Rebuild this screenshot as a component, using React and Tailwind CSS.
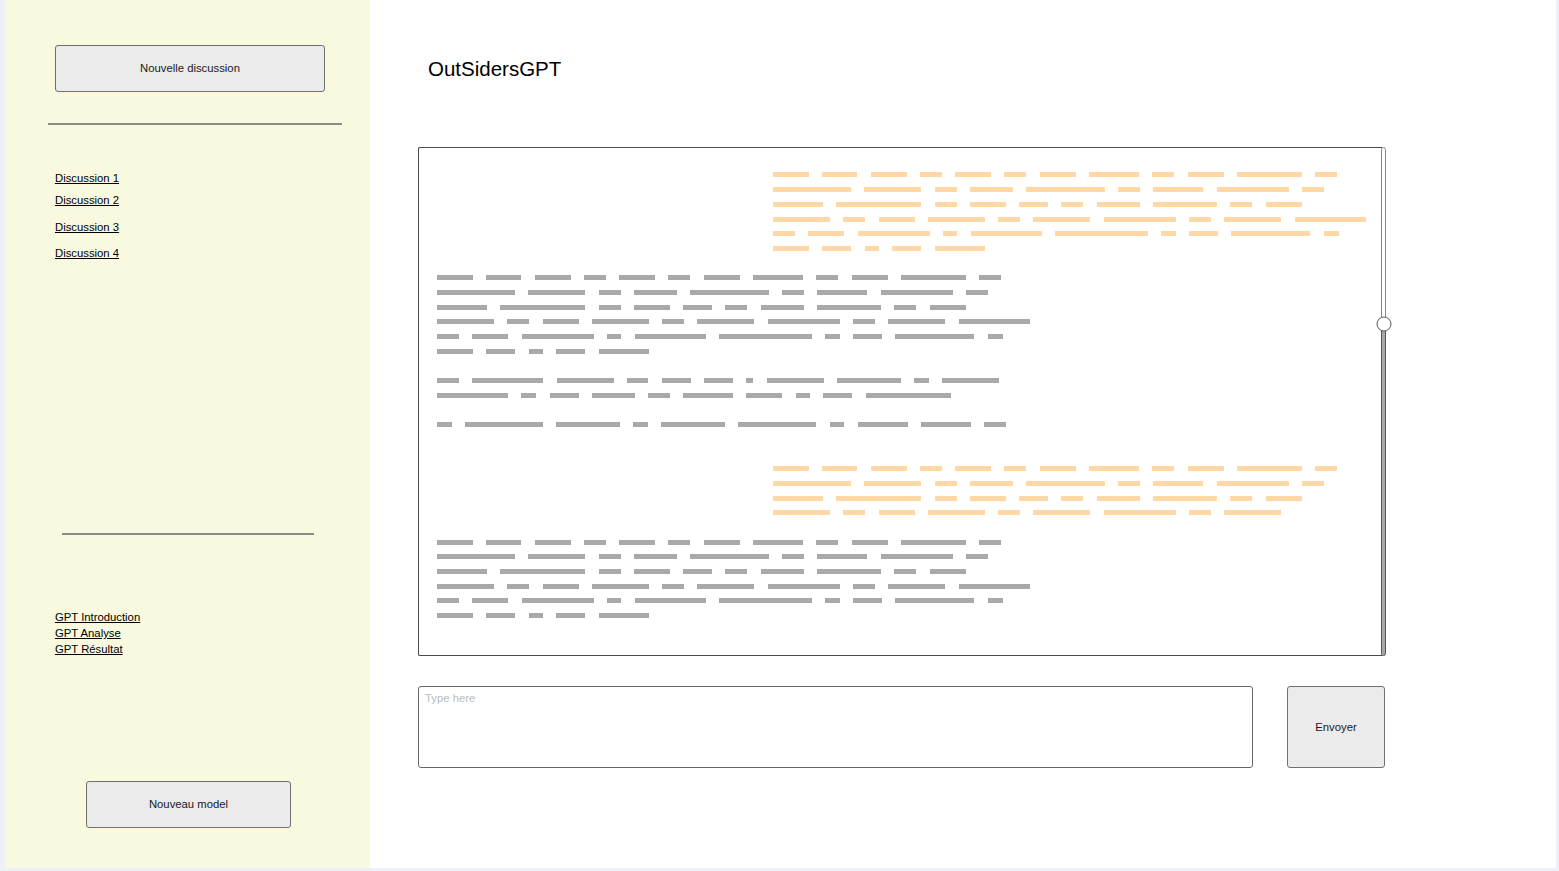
import React from 'react';

// greeked text: each number is the width of one word bar
const A = [
  [35.5, 35.5, 36, 22, 36, 22, 36, 50, 22, 36, 65, 22],
  [78, 57, 22, 43, 78.5, 22, 50, 72, 22],
  [50, 85, 22, 36, 29, 22, 43, 64, 22, 36],
  [57, 22, 36, 57, 22, 57, 72, 22, 57, 71.5],
  [22, 36, 72, 14.5, 71, 93, 14.5, 29, 79, 15],
  [36, 29, 14.5, 29, 50],
];
const B = [
  [22, 71, 57, 21.5, 29, 29, 7, 57, 64, 14.5, 57],
  [71, 15, 29, 43, 21.5, 50, 36, 14.5, 29, 85],
];
const C = [[14.5, 78, 64, 14.5, 64, 78, 14.5, 50, 50, 22]];
const A2 = [A[0], A[1], A[2], A[3].slice(0, 9)];

function Row({ words, kind }) {
  const orange = kind === 'o';
  return (
    <div className={`h-[14.7px] flex items-center gap-[13.3px] ${orange ? 'pl-[354px]' : 'pl-[18px]'}`}>
      {words.map((w, i) => (
        <div
          key={i}
          className={`h-[5px] shrink-0 ${orange ? 'bg-[#ffd8a6]' : 'bg-[#a9a9a9]'}`}
          style={{ width: w }}
        />
      ))}
    </div>
  );
}

function Blank() {
  return <div className="h-[14.7px]" />;
}

function Para({ rows, kind }) {
  return rows.map((r, i) => <Row key={i} words={r} kind={kind} />);
}

const linkCls = 'block w-fit text-[11.3px] leading-[13px] text-black underline underline-offset-[1px]';
const btnCls =
  'flex items-center justify-center bg-[#ebebeb] border border-[#707070] rounded-[3px] text-[11.3px] text-[#1a1a1a]';

export default function App() {
  return (
    <div
      className="w-[1559px] h-[871px] bg-[#edf1f7] pl-[5px] pr-[3px] pb-[3px] flex overflow-hidden"
      style={{ fontFamily: '"Liberation Sans", Arial, sans-serif' }}
    >
      <aside className="w-[365px] h-full bg-[#f8f9df] flex flex-col">
        <button className={`${btnCls} mt-[45px] ml-[50px] w-[270px] h-[47px]`}>Nouvelle discussion</button>
        <div className="mt-[31px] ml-[43px] w-[294px] h-[2px] bg-[#8c8c8c]" />

        <a href="#" className={`${linkCls} mt-[46.5px] ml-[50px]`}>Discussion 1</a>
        <a href="#" className={`${linkCls} mt-[9px] ml-[50px]`}>Discussion 2</a>
        <a href="#" className={`${linkCls} mt-[14px] ml-[50px]`}>Discussion 3</a>
        <a href="#" className={`${linkCls} mt-[13px] ml-[50px]`}>Discussion 4</a>

        <div className="mt-[273.5px] ml-[57px] w-[252px] h-[2px] bg-[#8c8c8c]" />

        <div className="mt-[74px] ml-[50px] flex flex-col">
          <a href="#" className="w-fit text-[11.3px] leading-[16px] text-black underline">GPT Introduction</a>
          <a href="#" className="w-fit text-[11.3px] leading-[16px] text-black underline">GPT Analyse</a>
          <a href="#" className="w-fit text-[11.3px] leading-[16px] text-black underline">GPT Résultat</a>
        </div>

        <button className={`${btnCls} mt-[124px] ml-[81px] w-[205px] h-[47px]`}>Nouveau model</button>
      </aside>

      <main className="flex-1 h-full bg-white flex flex-col">
        <h1 className="mt-[57px] ml-[58px] text-[20.5px] leading-[24px] text-black">OutSidersGPT</h1>

        <div className="mt-[66px] ml-[48px] w-[968px] h-[509px] flex">
          <div className="flex-1 border-t border-l border-b border-[#4a4a4a] rounded-l-[2px] pt-[19.6px]">
            <Para rows={A} kind="o" />
            <Blank />
            <Para rows={A} kind="g" />
            <Blank />
            <Para rows={B} kind="g" />
            <Blank />
            <Para rows={C} kind="g" />
            <Blank />
            <Blank />
            <Para rows={A2} kind="o" />
            <Blank />
            <Para rows={A} kind="g" />
          </div>
          <div className="relative w-[5px] -ml-[1px] flex flex-col">
            <div className="h-[177px] bg-white border border-[#8a8a8a] rounded-t-[3px]" />
            <div className="flex-1 bg-[#a8a8a8] border border-[#555] rounded-b-[3px]" />
            <div className="absolute left-1/2 top-[177px] -translate-x-1/2 -translate-y-1/2 w-[15px] h-[15px] rounded-full bg-white border border-[#5a5a5a]" />
          </div>
        </div>

        <div className="mt-[30px] ml-[48px] flex gap-[34px]">
          <div className="w-[835px] h-[82px] border border-[#666] rounded-[3px] pl-[6px] pt-[4px] text-[11.3px] leading-[14px] text-[#bdbdbd]">
            Type here
          </div>
          <button className={`${btnCls} w-[98px] h-[82px]`}>Envoyer</button>
        </div>
      </main>
    </div>
  );
}
